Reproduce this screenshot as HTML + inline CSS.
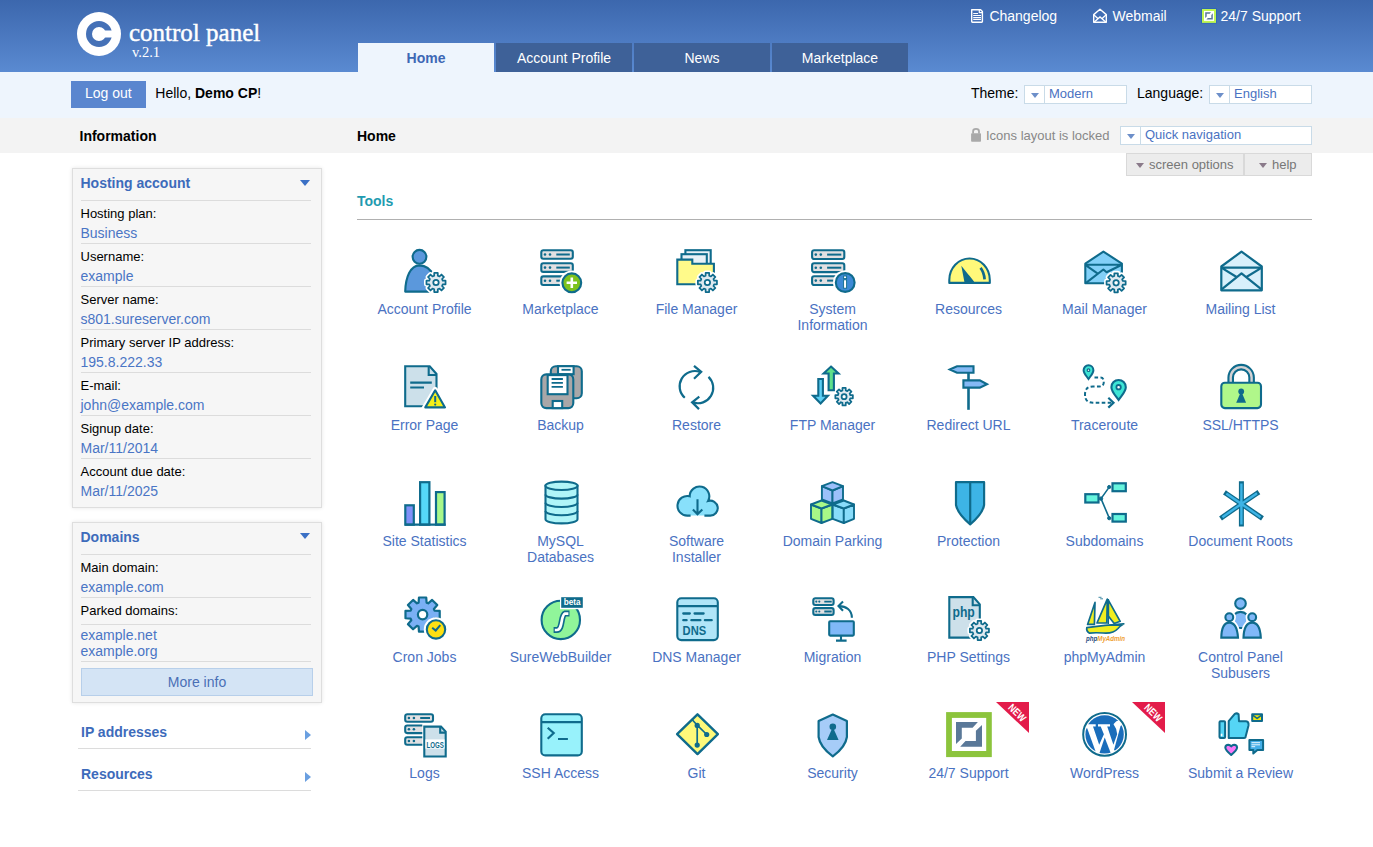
<!DOCTYPE html>
<html><head><meta charset="utf-8">
<style>
*{margin:0;padding:0;box-sizing:border-box}
html,body{width:1373px;height:847px;overflow:hidden;background:#fff;font-family:"Liberation Sans",sans-serif;font-size:14px;color:#000}
.a{position:absolute;white-space:nowrap}
#hdr{position:absolute;left:0;top:0;width:1373px;height:72px;background:linear-gradient(#3c67ad,#5a8ad1)}
#band{position:absolute;left:0;top:72px;width:1373px;height:46px;background:#eef5fd}
#gray{position:absolute;left:0;top:118px;width:1373px;height:35px;background:#f3f3f3}
.tab{position:absolute;top:43px;height:29px;width:136px;background:#3e6198;color:#fff;text-align:center;font-size:14px;line-height:31px}
.tab.on{background:#eef5fd;color:#3d68b5;font-weight:bold}
.tl{color:#fff;font-size:14px;line-height:16px}
.sel{position:absolute;height:19px;background:#fff;border:1px solid #c9dbe8}
.sel .ar{position:absolute;left:0;top:0;width:20px;height:17px;border-right:1px solid #c9dbe8}
.sel .ar:after{content:"";position:absolute;left:5.5px;top:6.5px;border-left:4.5px solid transparent;border-right:4.5px solid transparent;border-top:5px solid #6d8fc9}
.sel .tx{position:absolute;left:24px;top:0px;font-size:13px;line-height:15px;color:#4a72c2}
.box{position:absolute;left:72px;width:250px;background:#f6f6f6;border:1px solid #dedede;box-shadow:0 0 4px rgba(0,0,0,.10)}
.bh{position:absolute;left:7.5px;font-weight:bold;color:#3d6bbb;font-size:14px;line-height:16px}
.tri{position:absolute;left:227px;border-left:5.5px solid transparent;border-right:5.5px solid transparent;border-top:6px solid #3b70c5}
.sep{position:absolute;left:8px;width:230px;height:1px;background:#dcdcdc}
.lb{position:absolute;left:7.5px;font-size:13px;line-height:15px;color:#000}
.vl{position:absolute;left:7.5px;font-size:14px;line-height:16px;color:#4a75c5}
.ic{position:absolute;width:136px;text-align:center}
.ic svg{position:absolute;left:44px;top:0;width:48px;height:48px;overflow:visible}
.ic .t{position:absolute;left:0.5px;top:55px;width:136px;text-align:center;color:#4a72c2;font-size:14px;line-height:16px;white-space:normal}
</style></head><body>
<div id="hdr"></div>
<div id="band"></div>
<div id="gray"></div>
<!-- logo -->
<svg class="a" style="left:77px;top:12px" width="44" height="44" viewBox="0 0 44 44">
<circle cx="22" cy="22" r="22" fill="#fff"/>
<circle cx="22" cy="22" r="10" fill="none" stroke="#4571b7" stroke-width="6"/>
<rect x="28" y="18.5" width="10" height="7" fill="#fff"/>
</svg>
<div class="a" style="left:129px;top:18px;font-family:'Liberation Serif',serif;font-size:25px;line-height:30px;color:#fff;-webkit-text-stroke:0.4px #fff">control panel</div>
<div class="a" style="left:132px;top:44px;font-family:'Liberation Serif',serif;font-size:14.5px;line-height:17px;color:#fff">v.2.1</div>
<!-- tabs -->
<div class="tab on" style="left:358px">Home</div>
<div class="tab" style="left:496px">Account Profile</div>
<div class="tab" style="left:634px">News</div>
<div class="tab" style="left:772px">Marketplace</div>
<!-- top links -->
<div class="a tl" style="left:989.4px;top:8px">Changelog</div>
<div class="a tl" style="left:1112.5px;top:8px">Webmail</div>
<div class="a tl" style="left:1220.5px;top:8px">24/7 Support</div>
<!-- band -->
<div class="a" style="left:71px;top:81px;width:75px;height:27px;background:#5a86cf;color:#fff;text-align:center;line-height:24.5px;text-indent:-0.5px">Log out</div>
<div class="a" style="left:155.3px;top:85.3px;line-height:16px">Hello, <b>Demo CP</b>!</div>
<div class="a" style="left:971px;top:85px;line-height:16px">Theme:</div>
<div class="sel" style="left:1024px;top:85px;width:103px"><div class="ar"></div><div class="tx">Modern</div></div>
<div class="a" style="left:1137px;top:85px;line-height:16px">Language:</div>
<div class="sel" style="left:1209px;top:85px;width:103px"><div class="ar"></div><div class="tx">English</div></div>
<!-- gray band -->
<div class="a" style="left:79.5px;top:128px;font-weight:bold;line-height:16px">Information</div>
<div class="a" style="left:357px;top:128px;font-weight:bold;line-height:16px">Home</div>
<div class="a" style="left:986px;top:128px;font-size:13px;line-height:15px;color:#888">Icons layout is locked</div>
<div class="sel" style="left:1120px;top:126px;width:192px"><div class="ar"></div><div class="tx">Quick navigation</div></div>
<div class="a" style="left:1126px;top:153px;width:118px;height:23px;background:#ececec;border:1px solid #d9d9d9;font-size:13px;line-height:21px;color:#777;padding-left:22px">screen options</div>
<div class="a" style="left:1244px;top:153px;width:68px;height:23px;background:#ececec;border:1px solid #d9d9d9;font-size:13px;line-height:21px;color:#777;padding-left:27px">help</div>
<!-- tools -->
<div class="a" style="left:357px;top:193px;font-weight:bold;color:#1f9bb0;line-height:16px">Tools</div>
<div class="a" style="left:357px;top:219px;width:955px;height:1px;background:#b0b0b0"></div>
<!--HDRICONS-->
<svg class="a" style="left:966px;top:4px" width="24" height="24" viewBox="966 4 24 24"><path d="M971.7,9.7H980.6L982.4,11.5V21.6Q982.4,22.3 981.7,22.3H972.4Q971.7,22.3 971.7,21.6Z" fill="none" stroke="#fff" stroke-width="1.4" stroke-linejoin="round"/><path d="M973.2,13.5H978M973.2,15.5H981M973.2,17.5H981M973.2,19.4H981" stroke="#fff" stroke-width="1.1"/><path d="M979.3,9.7V12.6H982.4" fill="none" stroke="#fff" stroke-width="1.2"/></svg>
<svg class="a" style="left:1088px;top:4px" width="24" height="24" viewBox="1088 4 24 24"><path d="M1093.7,22.2V14.6L1100,9.2L1106.3,14.6V22.2Z" fill="none" stroke="#fff" stroke-width="1.4" stroke-linejoin="round"/><path d="M1094,15L1097.6,18.2M1106,15L1102.4,18.2M1094.3,21.9L1100,16.9L1105.7,21.9" fill="none" stroke="#fff" stroke-width="1.3"/></svg>
<svg class="a" style="left:1197px;top:4px" width="24" height="24" viewBox="1197 4 24 24"><rect x="1201.4" y="8.4" width="15.2" height="15" fill="#2563b0"/><rect x="1202" y="9" width="14" height="13.9" fill="#bff552"/><rect x="1204" y="11" width="10" height="9.9" fill="#fff"/><path d="M1205.2,12.2H1211.1L1209.6,13.7H1206.7V16.5L1205.2,18Z" fill="#5a7898"/><path d="M1212.8,13.2V19.6H1206.4L1207.9,18.1H1211.3V15Z" fill="#5a7898"/></svg>
<svg class="a" style="left:964px;top:122px" width="24" height="24" viewBox="964 122 24 24"><path d="M973.1,133.5V131.3Q973.1,128.9 976,128.9Q979,128.9 979,131.3V133.5" fill="none" stroke="#a9a9a9" stroke-width="1.8"/><rect x="971.1" y="133.3" width="9.9" height="8.5" rx="0.8" fill="#a9a9a9"/></svg>
<div class="a" style="left:1136px;top:163px;border-left:4.6px solid transparent;border-right:4.6px solid transparent;border-top:5.2px solid #8a7a8a"></div>
<div class="a" style="left:1259px;top:163px;border-left:4.6px solid transparent;border-right:4.6px solid transparent;border-top:5.2px solid #8a7a8a"></div>
<!--/HDRICONS-->
<!--SIDEBAR-->
<div class="box" style="top:168px;height:340px">
<div class="bh" style="top:6px">Hosting account</div><div class="tri" style="top:11px"></div><div class="sep" style="top:31px"></div>
<div class="lb" style="top:37px">Hosting plan:</div><div class="vl" style="top:56px">Business</div>
<div class="sep" style="top:74px"></div>
<div class="lb" style="top:80px">Username:</div><div class="vl" style="top:99px">example</div>
<div class="sep" style="top:117px"></div>
<div class="lb" style="top:123px">Server name:</div><div class="vl" style="top:142px">s801.sureserver.com</div>
<div class="sep" style="top:160px"></div>
<div class="lb" style="top:166px">Primary server IP address:</div><div class="vl" style="top:185px">195.8.222.33</div>
<div class="sep" style="top:203px"></div>
<div class="lb" style="top:209px">E-mail:</div><div class="vl" style="top:228px">john@example.com</div>
<div class="sep" style="top:246px"></div>
<div class="lb" style="top:252px">Signup date:</div><div class="vl" style="top:271px">Mar/11/2014</div>
<div class="sep" style="top:289px"></div>
<div class="lb" style="top:295px">Account due date:</div><div class="vl" style="top:314px">Mar/11/2025</div>
</div>
<div class="box" style="top:522px;height:181px">
<div class="bh" style="top:6px">Domains</div><div class="tri" style="top:10px"></div><div class="sep" style="top:31px"></div>
<div class="lb" style="top:37px">Main domain:</div><div class="vl" style="top:56px">example.com</div><div class="sep" style="top:74px"></div>
<div class="lb" style="top:80px">Parked domains:</div><div class="sep" style="top:101px"></div>
<div class="vl" style="top:104px">example.net</div><div class="vl" style="top:120px">example.org</div><div class="sep" style="top:138px"></div>
<div style="position:absolute;left:8px;top:145px;width:232px;height:28px;background:#d4e4f5;border:1px solid #b7cfea;text-align:center;line-height:26px;color:#4a6fb5">More info</div>
</div>
<div class="a" style="left:81px;top:724px;font-weight:bold;color:#3d6bbb;line-height:16px">IP addresses</div>
<div class="a" style="left:305px;top:730px;border-top:5.5px solid transparent;border-bottom:5.5px solid transparent;border-left:6.5px solid #6a9fe0"></div>
<div class="a" style="left:78px;top:748px;width:233px;height:1px;background:#dcdcdc"></div>
<div class="a" style="left:81px;top:766px;font-weight:bold;color:#3d6bbb;line-height:16px">Resources</div>
<div class="a" style="left:305px;top:772px;border-top:5.5px solid transparent;border-bottom:5.5px solid transparent;border-left:6.5px solid #6a9fe0"></div>
<div class="a" style="left:78px;top:790px;width:233px;height:1px;background:#dcdcdc"></div>
<!--/SIDEBAR-->
<!--ICONS-->
<div class="ic" style="left:356px;top:246px"><svg viewBox="0 0 48 48"><g stroke="#0f6b8c" stroke-width="2.1" stroke-linejoin="round"><path d="M5.2,45.6 C5.6,31 10.5,19.6 19.5,19.4 C26,19.4 30.5,23 34,30 L34,45.6Z" fill="#5b98dc"/><circle cx="19.5" cy="10.8" r="6.9" fill="#5b98dc"/></g><path d="M34.19,29.74 L34.23,26.96 L37.77,26.96 L37.81,29.74 L39.50,30.44 L41.49,28.51 L43.99,31.01 L42.06,33.00 L42.76,34.69 L45.54,34.73 L45.54,38.27 L42.76,38.31 L42.06,40.00 L43.99,41.99 L41.49,44.49 L39.50,42.56 L37.81,43.26 L37.77,46.04 L34.23,46.04 L34.19,43.26 L32.50,42.56 L30.51,44.49 L28.01,41.99 L29.94,40.00 L29.24,38.31 L26.46,38.27 L26.46,34.73 L29.24,34.69 L29.94,33.00 L28.01,31.01 L30.51,28.51 L32.50,30.44Z" fill="#fff" stroke="#fff" stroke-width="4.95" stroke-linejoin="round"/><path d="M34.19,29.74 L34.23,26.96 L37.77,26.96 L37.81,29.74 L39.50,30.44 L41.49,28.51 L43.99,31.01 L42.06,33.00 L42.76,34.69 L45.54,34.73 L45.54,38.27 L42.76,38.31 L42.06,40.00 L43.99,41.99 L41.49,44.49 L39.50,42.56 L37.81,43.26 L37.77,46.04 L34.23,46.04 L34.19,43.26 L32.50,42.56 L30.51,44.49 L28.01,41.99 L29.94,40.00 L29.24,38.31 L26.46,38.27 L26.46,34.73 L29.24,34.69 L29.94,33.00 L28.01,31.01 L30.51,28.51 L32.50,30.44Z" fill="#dfe9f0" stroke="#0f6b8c" stroke-width="1.75" stroke-linejoin="round"/><circle cx="36" cy="36.5" r="2.7" fill="#fff" stroke="#0f6b8c" stroke-width="1.75"/></svg><div class="t">Account Profile</div></div>
<div class="ic" style="left:492px;top:246px"><svg viewBox="0 0 48 48"><rect x="5.3" y="4.2" width="31.499999999999996" height="8.6" rx="2" fill="#e1e0e2" stroke="#0f6b8c" stroke-width="2.1"/><circle cx="9.0" cy="8.5" r="1.3" fill="#0f6b8c"/><circle cx="14.0" cy="8.5" r="1.3" fill="#0f6b8c"/><path d="M20.3,8.5H33.8" stroke="#0f6b8c" stroke-width="2"/><rect x="5.3" y="17.3" width="31.499999999999996" height="8.6" rx="2" fill="#e1e0e2" stroke="#0f6b8c" stroke-width="2.1"/><circle cx="9.0" cy="21.6" r="1.3" fill="#0f6b8c"/><circle cx="14.0" cy="21.6" r="1.3" fill="#0f6b8c"/><path d="M20.3,21.6H33.8" stroke="#0f6b8c" stroke-width="2"/><rect x="5.3" y="30.4" width="31.499999999999996" height="8.6" rx="2" fill="#e1e0e2" stroke="#0f6b8c" stroke-width="2.1"/><circle cx="9.0" cy="34.699999999999996" r="1.3" fill="#0f6b8c"/><circle cx="14.0" cy="34.699999999999996" r="1.3" fill="#0f6b8c"/><path d="M20.3,34.699999999999996H33.8" stroke="#0f6b8c" stroke-width="2"/><circle cx="35.8" cy="36.8" r="12.2" fill="#fff"/><circle cx="35.8" cy="36.8" r="9.4" fill="#7dc21e" stroke="#0f6b8c" stroke-width="2.1"/><path d="M30.6,36.8H41M35.8,31.6V42" stroke="#fff" stroke-width="2.6"/></svg><div class="t">Marketplace</div></div>
<div class="ic" style="left:628px;top:246px"><svg viewBox="0 0 48 48"><g stroke="#0f6b8c" stroke-width="2.1"><rect x="13.4" y="4.2" width="25.3" height="22" fill="#e8f1f7"/><rect x="9.5" y="8.2" width="25.3" height="20" fill="#e8f1f7"/><path d="M5.3,38.3V13.6H20.3V17.7H41.9V38.3Z" fill="#fffa8a"/></g><path d="M33.59,29.74 L33.63,26.96 L37.17,26.96 L37.21,29.74 L38.90,30.44 L40.89,28.51 L43.39,31.01 L41.46,33.00 L42.16,34.69 L44.94,34.73 L44.94,38.27 L42.16,38.31 L41.46,40.00 L43.39,41.99 L40.89,44.49 L38.90,42.56 L37.21,43.26 L37.17,46.04 L33.63,46.04 L33.59,43.26 L31.90,42.56 L29.91,44.49 L27.41,41.99 L29.34,40.00 L28.64,38.31 L25.86,38.27 L25.86,34.73 L28.64,34.69 L29.34,33.00 L27.41,31.01 L29.91,28.51 L31.90,30.44Z" fill="#fff" stroke="#fff" stroke-width="4.95" stroke-linejoin="round"/><path d="M33.59,29.74 L33.63,26.96 L37.17,26.96 L37.21,29.74 L38.90,30.44 L40.89,28.51 L43.39,31.01 L41.46,33.00 L42.16,34.69 L44.94,34.73 L44.94,38.27 L42.16,38.31 L41.46,40.00 L43.39,41.99 L40.89,44.49 L38.90,42.56 L37.21,43.26 L37.17,46.04 L33.63,46.04 L33.59,43.26 L31.90,42.56 L29.91,44.49 L27.41,41.99 L29.34,40.00 L28.64,38.31 L25.86,38.27 L25.86,34.73 L28.64,34.69 L29.34,33.00 L27.41,31.01 L29.91,28.51 L31.90,30.44Z" fill="#dfe9f0" stroke="#0f6b8c" stroke-width="1.75" stroke-linejoin="round"/><circle cx="35.4" cy="36.5" r="2.7" fill="#fff" stroke="#0f6b8c" stroke-width="1.75"/></svg><div class="t">File Manager</div></div>
<div class="ic" style="left:764px;top:246px"><svg viewBox="0 0 48 48"><rect x="4.1" y="4.2" width="32.199999999999996" height="8.8" rx="2" fill="#e1e0e2" stroke="#0f6b8c" stroke-width="2.1"/><circle cx="7.8" cy="8.600000000000001" r="1.3" fill="#0f6b8c"/><circle cx="12.799999999999999" cy="8.600000000000001" r="1.3" fill="#0f6b8c"/><path d="M19.1,8.600000000000001H33.3" stroke="#0f6b8c" stroke-width="2"/><rect x="4.1" y="17.3" width="32.199999999999996" height="8.8" rx="2" fill="#e1e0e2" stroke="#0f6b8c" stroke-width="2.1"/><circle cx="7.8" cy="21.700000000000003" r="1.3" fill="#0f6b8c"/><circle cx="12.799999999999999" cy="21.700000000000003" r="1.3" fill="#0f6b8c"/><path d="M19.1,21.700000000000003H33.3" stroke="#0f6b8c" stroke-width="2"/><rect x="4.1" y="30.2" width="32.199999999999996" height="8.8" rx="2" fill="#e1e0e2" stroke="#0f6b8c" stroke-width="2.1"/><circle cx="7.8" cy="34.6" r="1.3" fill="#0f6b8c"/><circle cx="12.799999999999999" cy="34.6" r="1.3" fill="#0f6b8c"/><path d="M19.1,34.6H33.3" stroke="#0f6b8c" stroke-width="2"/><circle cx="37.2" cy="36.5" r="12.2" fill="#fff"/><circle cx="37.2" cy="36.5" r="9.4" fill="#3d8ad6" stroke="#0f6b8c" stroke-width="2.1"/><rect x="35.6" y="30" width="3" height="2.6" fill="#fff" stroke="#0f6b8c" stroke-width="0.9"/><rect x="35.6" y="33.8" width="3" height="8.4" fill="#fff" stroke="#0f6b8c" stroke-width="0.9"/></svg><div class="t">System<br>Information</div></div>
<div class="ic" style="left:900px;top:246px"><svg viewBox="0 0 48 48"><path d="M5.3,36.9V34 A20.25,21.5 0 0 1 45.8,34V36.9Z" fill="#fff97a" stroke="#0f6b8c" stroke-width="2.1" stroke-linejoin="round"/><path d="M17.3,19.8L20.6,36.9H30.8C28.5,33 24,28.5 17.3,19.8Z" fill="#0f6b8c"/><path d="M36.5,21.8Q40,26 40.6,33.3" fill="none" stroke="#0f6b8c" stroke-width="2.7"/></svg><div class="t">Resources</div></div>
<div class="ic" style="left:1036px;top:246px"><svg viewBox="0 0 48 48"><g stroke="#0f6b8c" stroke-width="2.1" stroke-linejoin="round" fill="none"><path d="M5.3,37.3V17.6L23.4,5.6L41.9,17.6V37.3Z" fill="#82d0f8"/><path d="M5.3,18.8H41.9M5.3,18.8L17.4,27.3M5.7,37.2L23.4,23.5L26.6,26.2L41.9,18.8"/></g><path d="M34.29,30.04 L34.33,27.26 L37.87,27.26 L37.91,30.04 L39.60,30.74 L41.59,28.81 L44.09,31.31 L42.16,33.30 L42.86,34.99 L45.64,35.03 L45.64,38.57 L42.86,38.61 L42.16,40.30 L44.09,42.29 L41.59,44.79 L39.60,42.86 L37.91,43.56 L37.87,46.34 L34.33,46.34 L34.29,43.56 L32.60,42.86 L30.61,44.79 L28.11,42.29 L30.04,40.30 L29.34,38.61 L26.56,38.57 L26.56,35.03 L29.34,34.99 L30.04,33.30 L28.11,31.31 L30.61,28.81 L32.60,30.74Z" fill="#fff" stroke="#fff" stroke-width="4.95" stroke-linejoin="round"/><path d="M34.29,30.04 L34.33,27.26 L37.87,27.26 L37.91,30.04 L39.60,30.74 L41.59,28.81 L44.09,31.31 L42.16,33.30 L42.86,34.99 L45.64,35.03 L45.64,38.57 L42.86,38.61 L42.16,40.30 L44.09,42.29 L41.59,44.79 L39.60,42.86 L37.91,43.56 L37.87,46.34 L34.33,46.34 L34.29,43.56 L32.60,42.86 L30.61,44.79 L28.11,42.29 L30.04,40.30 L29.34,38.61 L26.56,38.57 L26.56,35.03 L29.34,34.99 L30.04,33.30 L28.11,31.31 L30.61,28.81 L32.60,30.74Z" fill="#dfe9f0" stroke="#0f6b8c" stroke-width="1.75" stroke-linejoin="round"/><circle cx="36.1" cy="36.8" r="2.7" fill="#fff" stroke="#0f6b8c" stroke-width="1.75"/></svg><div class="t">Mail Manager</div></div>
<div class="ic" style="left:1172px;top:246px"><svg viewBox="0 0 48 48"><g stroke="#0f6b8c" stroke-width="2.2" stroke-linejoin="round" fill="none"><path d="M5.3,44.3V20.5L25.5,5.6L45.8,20.5V44.3Z" fill="#d8f0fb"/><path d="M5.3,21.6H45.8M5.3,21.6L20.2,30.8M30.8,30.8L45.8,21.6M5.3,43.6L25.5,27.3L45.8,43.6"/></g></svg><div class="t">Mailing List</div></div>
<div class="ic" style="left:356px;top:362px"><svg viewBox="0 0 48 48"><g stroke="#0f6b8c" stroke-width="2.1" fill="none"><path d="M5.2,44.3V4.2H29.7L36.5,12V44.3Z" fill="#cce0ea"/><path d="M28.7,4.2V13H36.5"/><path d="M10.2,20.6H31.8M10.2,25.5H24" stroke-width="2.2"/></g><path d="M35.2,27.3L46.5,46.6H23.9Z" fill="#fff" stroke="#fff" stroke-width="5" stroke-linejoin="round"/><path d="M35.2,28.3L45,45.4H25.3Z" fill="#f5f019" stroke="#0f6b8c" stroke-width="2.1" stroke-linejoin="round"/><path d="M35.2,34V40.2" stroke="#0f6b8c" stroke-width="2"/><circle cx="35.2" cy="42.6" r="1.1" fill="#0f6b8c"/></svg><div class="t">Error Page</div></div>
<div class="ic" style="left:492px;top:362px"><svg viewBox="0 0 48 48"><g stroke="#0f6b8c" stroke-width="2.1"><rect x="14.8" y="4.2" width="31" height="32" rx="5" fill="#a9a7a8"/><rect x="22" y="4.2" width="15.6" height="8" fill="#fff"/><path d="M25.5,7.8H34.7" stroke-width="1.8"/><rect x="5.3" y="12.4" width="32" height="33.7" rx="5" fill="#a9a7a8"/><rect x="11.7" y="13.1" width="19.8" height="19.1" fill="#fff"/><path d="M15.6,17H26.9M15.6,20.9H26.9M15.6,24.8H26.9" stroke-width="1.8"/><rect x="16.7" y="39" width="9.5" height="7.1" fill="#fff"/></g></svg><div class="t">Backup</div></div>
<div class="ic" style="left:628px;top:362px"><svg viewBox="0 0 48 48"><g stroke="#0f6b8c" stroke-width="2.2" fill="none"><path d="M12.8,35.8A15.3,15.3 0 0 1 28,9.9"/><path d="M22,3.9L29.2,9.9L22,16.7"/><path d="M36.5,14.9A15.3,15.3 0 0 1 20.9,40.4"/><path d="M27.3,34.7L20.1,40.4L27,47.1"/></g></svg><div class="t">Restore</div></div>
<div class="ic" style="left:764px;top:362px"><svg viewBox="0 0 48 48"><g stroke="#0f6b8c" stroke-width="2.1" stroke-linejoin="miter"><path d="M23,4.6L30.5,11.5H25.9V28.3H20.6V11.5H15.6Z" fill="#5ee08a"/><path d="M10.3,17H14.9V33.8H19.9L12.6,41.5L5.1,33.8H10.3Z" fill="#5ccff5"/></g><path d="M34.44,28.52 L34.48,25.95 L37.72,25.95 L37.76,28.52 L39.30,29.16 L41.14,27.37 L43.43,29.66 L41.64,31.50 L42.28,33.04 L44.85,33.08 L44.85,36.32 L42.28,36.36 L41.64,37.90 L43.43,39.74 L41.14,42.03 L39.30,40.24 L37.76,40.88 L37.72,43.45 L34.48,43.45 L34.44,40.88 L32.90,40.24 L31.06,42.03 L28.77,39.74 L30.56,37.90 L29.92,36.36 L27.35,36.32 L27.35,33.08 L29.92,33.04 L30.56,31.50 L28.77,29.66 L31.06,27.37 L32.90,29.16Z" fill="#dfe9f0" stroke="#0f6b8c" stroke-width="1.75" stroke-linejoin="round"/><circle cx="36.1" cy="34.7" r="2.5" fill="#fff" stroke="#0f6b8c" stroke-width="1.75"/></svg><div class="t">FTP Manager</div></div>
<div class="ic" style="left:900px;top:362px"><svg viewBox="0 0 48 48"><g stroke="#0f6b8c" stroke-width="2.1" stroke-linejoin="miter"><path d="M24.5,11V47.8" stroke-width="2.6"/><path d="M5.8,7.5L13,4.2H29.5V10.7H13Z" fill="#85b9f5"/><path d="M19.4,18.4H35.8L43,22.2L35.8,25.6H19.4Z" fill="#85b9f5"/></g></svg><div class="t">Redirect URL</div></div>
<div class="ic" style="left:1036px;top:362px"><svg viewBox="0 0 48 48"><g stroke="#0f6b8c" stroke-width="2" fill="none"><path d="M14.5,15.6H20.5Q23.8,15.6 23.8,20Q23.8,24.5 19.5,24.5H13Q5,24.5 5,32.5Q5,40.7 13,40.7H33" stroke-dasharray="3.6 2.4"/><path d="M28.3,35.8L33.5,40.7L28.3,45.6" stroke-width="2.2"/><path d="M8.5,17C6,13.5 3.6,11 3.6,8.2A4.9,4.9 0 0 1 13.4,8.2C13.4,11 11,13.5 8.5,17Z" fill="#3de5d5"/><circle cx="8.5" cy="8.2" r="1.3" fill="#fff" stroke-width="1.2"/><path d="M38.6,38C35,33 31.4,29.5 31.4,25.2A7.2,7.2 0 0 1 45.8,25.2C45.8,29.5 42,33 38.6,38Z" fill="#3de5d5" stroke-width="2.1"/><circle cx="38.6" cy="25.2" r="2.2" fill="#fff" stroke-width="1.8"/></g></svg><div class="t">Traceroute</div></div>
<div class="ic" style="left:1172px;top:362px"><svg viewBox="0 0 48 48"><path d="M14.7,22V15.6A10.45,10.45 0 0 1 35.6,15.6V22" fill="none" stroke="#0f6b8c" stroke-width="6.6"/><path d="M14.7,22V15.6A10.45,10.45 0 0 1 35.6,15.6V22" fill="none" stroke="#d4d2d4" stroke-width="2.4"/><rect x="5.3" y="20.8" width="39.7" height="25.3" rx="3.5" fill="#b0f78a" stroke="#0f6b8c" stroke-width="2.1"/><circle cx="25.2" cy="29.4" r="2.9" fill="#0f6b8c"/><path d="M25.2,29L30.1,40.7H20.2Z" fill="#0f6b8c"/></svg><div class="t">SSL/HTTPS</div></div>
<div class="ic" style="left:356px;top:478px"><svg viewBox="0 0 48 48"><g stroke="#0f6b8c" stroke-width="2.2"><rect x="5.3" y="27.3" width="8.5" height="19.4" fill="#8090f8"/><rect x="20.1" y="4.2" width="9.3" height="42.5" fill="#55d8f8"/><rect x="36" y="14.1" width="8.6" height="32.6" fill="#a8f88a"/><path d="M5,46.7H45.7"/></g></svg><div class="t">Site Statistics</div></div>
<div class="ic" style="left:492px;top:478px"><svg viewBox="0 0 48 48"><g stroke="#0f6b8c" stroke-width="2.1" fill="none"><path d="M9.5,7.8V41.2A16,4.2 0 0 0 41.5,41.2V7.8Z" fill="#b0f5f8"/><ellipse cx="25.5" cy="7.8" rx="16" ry="4.2" fill="#b0f5f8"/><path d="M9.5,16.4A16,4.2 0 0 0 41.5,16.4M9.5,24.8A16,4.2 0 0 0 41.5,24.8M9.5,33A16,4.2 0 0 0 41.5,33"/></g></svg><div class="t">MySQL<br>Databases</div></div>
<div class="ic" style="left:628px;top:478px"><svg viewBox="0 0 48 48"><path d="M15.4,37.6A9.8,9.8 0 1 1 17.7,18.3A9.8,9.8 0 1 1 36.14,22.9A7.5,7.5 0 1 1 38.3,37.6Z" fill="#88e0fb"/><g stroke="#0f6b8c" stroke-width="2.1" fill="none"><path d="M18.6,37.6H15.4A9.8,9.8 0 1 1 17.7,18.3A9.8,9.8 0 1 1 36.14,22.9A7.5,7.5 0 1 1 38.3,37.6H32.4"/><path d="M25.5,21.3V36.3M20.9,31.5L25.5,36.3L30.3,31.5"/></g></svg><div class="t">Software<br>Installer</div></div>
<div class="ic" style="left:764px;top:478px"><svg viewBox="0 0 48 48"><g stroke="#0f6b8c" stroke-width="1.9" stroke-linejoin="round"><path d="M13.9,8.2L24.5,12.5V25.5L13.9,21.5Z" fill="#9cc0fa"/><path d="M24.5,12.5L35,8.2V21.5L24.5,25.5Z" fill="#9cc0fa"/><path d="M24.5,4.2L35,8.2L24.5,12.5L13.9,8.2Z" fill="#9cc0fa"/><path d="M3,26.5L13.5,30.5V45L3,40.8Z" fill="#a8f887"/><path d="M13.5,30.5L24.3,26.5V40.8L13.5,45Z" fill="#a8f887"/><path d="M13.5,22.5L24.3,26.5L13.5,30.5L3,26.5Z" fill="#a8f887"/><path d="M24.7,26.5L35.8,30.5V45L24.7,40.8Z" fill="#88dcfa"/><path d="M35.8,30.5L46,26.5V40.8L35.8,45Z" fill="#88dcfa"/><path d="M35.8,22.5L46,26.5L35.8,30.5L24.7,26.5Z" fill="#88dcfa"/></g></svg><div class="t">Domain Parking</div></div>
<div class="ic" style="left:900px;top:478px"><svg viewBox="0 0 48 48"><g stroke="#0f6b8c" stroke-width="2.2" stroke-linejoin="round"><path d="M12,4.2H40.1V27Q38.5,36 26.2,46.3Q13.8,36 12,27Z" fill="#3db4e6"/><path d="M26.2,4.2V46"/></g></svg><div class="t">Protection</div></div>
<div class="ic" style="left:1036px;top:478px"><svg viewBox="0 0 48 48"><g stroke="#0f6b8c"><path d="M21,20.6L29.4,8.9M21,20.6L29.4,40.4" stroke-width="1.6"/><circle cx="21" cy="20.6" r="1.7" fill="#0f6b8c"/><circle cx="29.2" cy="9" r="1.6" fill="#0f6b8c"/><circle cx="29.2" cy="40.2" r="1.6" fill="#0f6b8c"/><rect x="5.3" y="16.2" width="13.2" height="8.3" fill="#66f5dd" stroke-width="2.2"/><rect x="32.5" y="5.3" width="13.3" height="7.9" fill="#66f5dd" stroke-width="2.2"/><rect x="32.5" y="36" width="13.3" height="7.6" fill="#66f5dd" stroke-width="2.2"/></g></svg><div class="t">Subdomains</div></div>
<div class="ic" style="left:1172px;top:478px"><svg viewBox="0 0 48 48"><g fill="none" stroke-linecap="square"><path d="M25.4,5.8V46M25.4,25.9L10.5,15.8M25.4,25.9L40.8,15.5M25.4,25.9L6.6,39M25.4,25.9L44.4,39" stroke="#0f6b8c" stroke-width="5"/><path d="M25.4,6.6V45.2M25.4,25.9L11.3,16.3M25.4,25.9L40,16M25.4,25.9L7.4,38.5M25.4,25.9L43.6,38.5" stroke="#3db4e6" stroke-width="2.4"/></g></svg><div class="t">Document Roots</div></div>
<div class="ic" style="left:356px;top:594px"><svg viewBox="0 0 48 48"><path d="M18.60,8.65 L18.96,3.48 L26.24,3.48 L26.60,8.65 L28.22,9.32 L32.13,5.92 L37.28,11.07 L33.88,14.98 L34.55,16.60 L39.72,16.96 L39.72,24.24 L34.55,24.60 L33.88,26.22 L37.28,30.13 L32.13,35.28 L28.22,31.88 L26.60,32.55 L26.24,37.72 L18.96,37.72 L18.60,32.55 L16.98,31.88 L13.07,35.28 L7.92,30.13 L11.32,26.22 L10.65,24.60 L5.48,24.24 L5.48,16.96 L10.65,16.60 L11.32,14.98 L7.92,11.07 L13.07,5.92 L16.98,9.32Z" fill="#7ab0f5" stroke="#0f6b8c" stroke-width="2.2" stroke-linejoin="round"/><circle cx="22.6" cy="20.6" r="4.7" fill="#fff" stroke="#0f6b8c" stroke-width="2.2"/><circle cx="36" cy="35.4" r="12.2" fill="#fff"/><circle cx="36" cy="35.4" r="9.2" fill="#fde012" stroke="#0f6b8c" stroke-width="2.1"/><path d="M32.2,33.7L35.7,36.5L40.3,31.2" fill="none" stroke="#0f6b8c" stroke-width="2"/></svg><div class="t">Cron Jobs</div></div>
<div class="ic" style="left:492px;top:594px"><svg viewBox="0 0 48 48"><circle cx="24.8" cy="25.9" r="19.2" fill="#90f59a" stroke="#0f6b8c" stroke-width="2.1"/><rect x="24" y="2" width="24" height="13.2" fill="#fff"/><rect x="25.2" y="3.2" width="21.6" height="10.6" fill="#0f6b8c"/><text x="36.2" y="11.2" text-anchor="middle" font-family="Liberation Sans" font-weight="bold" font-size="8.2" fill="#fff">beta</text><path d="M17.6,36H20.8C27,36 24.5,21.2 29,19.6H33.5" fill="none" stroke="#0f6b8c" stroke-width="6"/><path d="M18.8,36H20.8C27,36 24.5,21.2 29,19.6H32.4" fill="none" stroke="#fff" stroke-width="2.7"/></svg><div class="t">SureWebBuilder</div></div>
<div class="ic" style="left:628px;top:594px"><svg viewBox="0 0 48 48"><g stroke="#0f6b8c" stroke-width="2.1" fill="none"><rect x="5.3" y="4.2" width="40.5" height="41.9" rx="4" fill="#b0e5f8"/><path d="M5.3,12.1H45.8"/><path d="M11.3,19.5H17.8M22.6,19.5H31.6M11.3,26.2H14.6M19.4,26.2H28.4M32.9,26.2H39.7" stroke-width="2.3" stroke-linecap="round"/></g><text x="10.6" y="40.8" font-family="Liberation Sans" font-size="12" font-weight="bold" fill="#0f6b8c" textLength="23.6" lengthAdjust="spacingAndGlyphs">DNS</text></svg><div class="t">DNS Manager</div></div>
<div class="ic" style="left:764px;top:594px"><svg viewBox="0 0 48 48"><g stroke="#0f6b8c" stroke-width="2.1" fill="none"><rect x="5.3" y="4.2" width="20.3" height="6.8" rx="2" fill="#e1e0e2"/><rect x="5.3" y="14.1" width="20.3" height="6.8" rx="2" fill="#e1e0e2"/><path d="M16.3,7.6H23.7M16.3,17.5H23.7" stroke-width="1.9"/><path d="M43.9,23.7C43.9,16 38,12.1 31,12.1"/><path d="M35,7.6L30.5,12.1L35,16.8"/><rect x="21.2" y="27.2" width="24.6" height="14.4" rx="1" fill="#80b8f8"/><path d="M33,41.5V46.3M28,46.6H38.6"/></g><circle cx="8.3" cy="7.6" r="1.1" fill="#0f6b8c"/><circle cx="11.3" cy="7.6" r="1.1" fill="#0f6b8c"/><circle cx="8.3" cy="17.5" r="1.1" fill="#0f6b8c"/><circle cx="11.3" cy="17.5" r="1.1" fill="#0f6b8c"/></svg><div class="t">Migration</div></div>
<div class="ic" style="left:900px;top:594px"><svg viewBox="0 0 48 48"><g stroke="#0f6b8c" stroke-width="2.1" fill="none"><path d="M5.3,43.6V3.1H29.4L35.8,10.3V43.6Z" fill="#cde0ea"/><path d="M28.7,3.1V11.2H35.8"/></g><text x="8.5" y="23.2" font-family="Liberation Sans" font-size="14" font-weight="bold" fill="#0f6b8c" textLength="22.3" lengthAdjust="spacingAndGlyphs">php</text><path d="M33.59,29.74 L33.63,26.96 L37.17,26.96 L37.21,29.74 L38.90,30.44 L40.89,28.51 L43.39,31.01 L41.46,33.00 L42.16,34.69 L44.94,34.73 L44.94,38.27 L42.16,38.31 L41.46,40.00 L43.39,41.99 L40.89,44.49 L38.90,42.56 L37.21,43.26 L37.17,46.04 L33.63,46.04 L33.59,43.26 L31.90,42.56 L29.91,44.49 L27.41,41.99 L29.34,40.00 L28.64,38.31 L25.86,38.27 L25.86,34.73 L28.64,34.69 L29.34,33.00 L27.41,31.01 L29.91,28.51 L31.90,30.44Z" fill="#fff" stroke="#fff" stroke-width="4.95" stroke-linejoin="round"/><path d="M33.59,29.74 L33.63,26.96 L37.17,26.96 L37.21,29.74 L38.90,30.44 L40.89,28.51 L43.39,31.01 L41.46,33.00 L42.16,34.69 L44.94,34.73 L44.94,38.27 L42.16,38.31 L41.46,40.00 L43.39,41.99 L40.89,44.49 L38.90,42.56 L37.21,43.26 L37.17,46.04 L33.63,46.04 L33.59,43.26 L31.90,42.56 L29.91,44.49 L27.41,41.99 L29.34,40.00 L28.64,38.31 L25.86,38.27 L25.86,34.73 L28.64,34.69 L29.34,33.00 L27.41,31.01 L29.91,28.51 L31.90,30.44Z" fill="#dfe9f0" stroke="#0f6b8c" stroke-width="1.75" stroke-linejoin="round"/><circle cx="35.4" cy="36.5" r="2.7" fill="#fff" stroke="#0f6b8c" stroke-width="1.75"/></svg><div class="t">PHP Settings</div></div>
<div class="ic" style="left:1036px;top:594px"><svg viewBox="0 0 48 48"><g stroke="#0f6b8c" stroke-width="1.7" stroke-linejoin="round"><path d="M15,8.4L7.6,30.4H14.4Z" fill="#f0ee20"/><path d="M27.3,5.2L17,29H26.8Z" fill="#f0ee20"/><path d="M28.3,6.2L40.2,27.3L34.2,29.5L28.3,22Z" fill="#f0ee20"/><path d="M28.2,5V30" /><path d="M6.8,33.6Q25,31 43.8,29.8Q40,32 38,34.5Q33,40 23,39Q14,38.4 9.6,39.2Q6,37 6.8,33.6Z" fill="#f0ee20"/></g><path d="M18.5,3.3H21.5M20.2,4.8H23" stroke="#0f6b8c" stroke-width="0.8"/><text x="6" y="47.4" font-family="Liberation Sans" font-size="6.6" font-weight="bold" font-style="italic" textLength="39" lengthAdjust="spacingAndGlyphs"><tspan fill="#2a4a80">php</tspan><tspan fill="#f0a030">MyAdmin</tspan></text></svg><div class="t">phpMyAdmin</div></div>
<div class="ic" style="left:1172px;top:594px"><svg viewBox="0 0 48 48"><path d="M17.6,21Q24.5,14.6 31.4,21L28.6,34.2H20.4Z" fill="#80b8f8"/><path d="M17.6,21Q24.5,14.8 31.4,21M21.2,34H27.8" fill="none" stroke="#0f6b8c" stroke-width="2.1"/><circle cx="24.5" cy="9.6" r="5.3" fill="#80b8f8" stroke="#0f6b8c" stroke-width="2.1"/><g stroke="#fff" stroke-width="5.5" fill="#fff"><path d="M5.3,43.6Q5.6,28.6 13.3,28.6Q21,28.6 22,43.6Z"/><circle cx="13.3" cy="23.2" r="3.9"/><path d="M27.5,43.6Q28,28.6 36.2,28.6Q44,28.6 44.8,43.6Z"/><circle cx="36.2" cy="23.2" r="3.9"/></g><g stroke="#0f6b8c" stroke-width="2.1" fill="#80b8f8"><path d="M5.3,43.6Q5.6,28.6 13.3,28.6Q21,28.6 22,43.6Z"/><circle cx="13.3" cy="23.2" r="3.9"/><path d="M27.5,43.6Q28,28.6 36.2,28.6Q44,28.6 44.8,43.6Z"/><circle cx="36.2" cy="23.2" r="3.9"/></g></svg><div class="t">Control Panel<br>Subusers</div></div>
<div class="ic" style="left:356px;top:710px"><svg viewBox="0 0 48 48"><rect x="5.2" y="4.2" width="27.8" height="7.6" rx="2" fill="#e1e0e2" stroke="#0f6b8c" stroke-width="2.1"/><circle cx="8.9" cy="8.0" r="1.3" fill="#0f6b8c"/><circle cx="13.899999999999999" cy="8.0" r="1.3" fill="#0f6b8c"/><path d="M20.2,8.0H30" stroke="#0f6b8c" stroke-width="2"/><rect x="5.2" y="15.5" width="27.8" height="7.6" rx="2" fill="#e1e0e2" stroke="#0f6b8c" stroke-width="2.1"/><circle cx="8.9" cy="19.3" r="1.3" fill="#0f6b8c"/><circle cx="13.899999999999999" cy="19.3" r="1.3" fill="#0f6b8c"/><rect x="5.2" y="27.2" width="27.8" height="7.6" rx="2" fill="#e1e0e2" stroke="#0f6b8c" stroke-width="2.1"/><circle cx="8.9" cy="31.0" r="1.3" fill="#0f6b8c"/><circle cx="13.899999999999999" cy="31.0" r="1.3" fill="#0f6b8c"/><path d="M24.3,47V16.1H41.5L46.7,21.4V47Z" fill="#fff" stroke="#fff" stroke-width="4"/><g stroke="#0f6b8c" stroke-width="2.1" fill="none"><path d="M24.3,46.5V16.6H41L45.7,21.6V46.5Z" fill="#cde0ea"/><path d="M40.2,16.6V22.6H45.7"/></g><rect x="25.4" y="29.4" width="19.2" height="9.2" fill="#fff"/><text x="26.4" y="37.6" font-family="Liberation Sans" font-size="9" font-weight="bold" fill="#0f6b8c" textLength="17.4" lengthAdjust="spacingAndGlyphs">LOGS</text></svg><div class="t">Logs</div></div>
<div class="ic" style="left:492px;top:710px"><svg viewBox="0 0 48 48"><g stroke="#0f6b8c" stroke-width="2.1" fill="none"><rect x="5.3" y="4.2" width="40.5" height="41.2" rx="4" fill="#98f2fb"/><path d="M5.3,12.1H45.8"/><path d="M11.7,17.7L17.7,23L11.7,28.7M22,29H31.9" stroke-width="2.2"/></g></svg><div class="t">SSH Access</div></div>
<div class="ic" style="left:628px;top:710px"><svg viewBox="0 0 48 48"><g stroke="#0f6b8c" stroke-width="2.1" stroke-linejoin="round"><path d="M25.5,4.3L45.9,24.2L25.5,44.1L5.1,24.2Z" fill="#fdf97a" stroke-width="2.4"/><path d="M19.6,9L25.2,15.2V35.1M25.2,15.2L34.7,24.5" fill="none" stroke-width="1.7"/></g><circle cx="25.2" cy="15.4" r="2.6" fill="#0f6b8c"/><circle cx="25.2" cy="35.1" r="2.6" fill="#0f6b8c"/><circle cx="34.7" cy="24.5" r="2.6" fill="#0f6b8c"/></svg><div class="t">Git</div></div>
<div class="ic" style="left:764px;top:710px"><svg viewBox="0 0 48 48"><path d="M24.8,4.5L10.6,11V27Q12,37 24.8,46.3Q37.6,37 38.9,27V11Z" fill="#a6ccf8" stroke="#0f6b8c" stroke-width="2.2" stroke-linejoin="round"/><circle cx="24.8" cy="16.7" r="3.3" fill="#0f6b8c"/><path d="M24.8,17L30.6,30.1H19Z" fill="#0f6b8c"/></svg><div class="t">Security</div></div>
<div class="ic" style="left:900px;top:710px"><svg viewBox="0 0 48 48"><rect x="2.1" y="2.1" width="45.7" height="45" fill="#8cc43c"/><rect x="7.9" y="7.9" width="34.3" height="33.1" fill="#fff"/><path d="M12,12H33.9L28.6,17.8H17.8V28.6L12,33.9Z" fill="#5a7898"/><path d="M38,14.9V36.8H16.2L21.5,31H31.9V20.7Z" fill="#5a7898"/></svg><div class="t">24/7 Support</div></div>
<div class="ic" style="left:1036px;top:710px"><svg viewBox="0 0 48 48"><defs><clipPath id="wpc"><circle cx="24.6" cy="24.4" r="19.2"/></clipPath></defs><circle cx="24.6" cy="24.4" r="21.4" fill="#fff" stroke="#0f6b8c" stroke-width="2"/><g clip-path="url(#wpc)" fill="#1a6dbb"><path d="M-10,-10H58V6L36.3,11.2L33.4,14.25H-10Z"/><path d="M-10,18.2H7.2L15.6,41.4L-10,60Z"/><path d="M15.7,14H18V16.4H20.7L23.9,24.2L19.2,34.8L13,16.4H15.7Z"/><path d="M30,14H33.4Q36.5,18 37.2,24.2L33.4,34.8L27.2,16.4H30Z"/><path d="M40.5,16L60,0V60L34,40Z"/><path d="M24.7,27.4L18.8,45H31.5Z"/></g></svg><div class="t">WordPress</div></div>
<div class="ic" style="left:1172px;top:710px"><svg viewBox="0 0 48 48"><g stroke="#0f6b8c" stroke-width="2" stroke-linejoin="round"><rect x="3.5" y="11.3" width="5.6" height="16.8" rx="1" fill="#55d5f5"/><path d="M12.7,28V11.2L18.8,3.8Q21,2.8 22.6,4.2L23,11.2H30Q33,11.6 32.5,15.5L29.4,27.4Q29,28 28,28Z" fill="#55d5f5"/><rect x="36.2" y="4.2" width="9.8" height="6.8" fill="#f5e80a"/><path d="M36.2,4.8L41.1,8.4L46,4.8" fill="none" stroke-width="1.6"/><path d="M15.2,45Q9.5,40 9.3,37.6Q9.5,34.8 12.3,34.8Q14,35 15.2,36.4Q16.4,35 18.1,34.8Q20.9,34.8 21.1,37.6Q20.9,40 15.2,45Z" fill="#f878f8"/><path d="M33.4,30.1H47.1V40.1H41.4L37.3,43.5V40.1H33.4Z" fill="#44aee8"/></g><path d="M35.5,32.7H44M35.5,34.8H44M35.5,36.7H39.2" stroke="#fff" stroke-width="0.9"/><rect x="4.8" y="23.7" width="1.6" height="2.5" fill="#fff"/></svg><div class="t">Submit a Review</div></div>
<svg class="a" style="left:996px;top:702px" width="33" height="31" viewBox="0 0 33 31"><path d="M0,0H33V31Z" fill="#e31c4a"/><text x="0" y="0" transform="translate(18.6,13.3) rotate(45)" text-anchor="middle" font-family="Liberation Sans" font-weight="bold" font-size="10.5" fill="#fff" textLength="20" lengthAdjust="spacingAndGlyphs">NEW</text></svg>
<svg class="a" style="left:1132px;top:702px" width="33" height="31" viewBox="0 0 33 31"><path d="M0,0H33V31Z" fill="#e31c4a"/><text x="0" y="0" transform="translate(18.6,13.3) rotate(45)" text-anchor="middle" font-family="Liberation Sans" font-weight="bold" font-size="10.5" fill="#fff" textLength="20" lengthAdjust="spacingAndGlyphs">NEW</text></svg>
<!--/ICONS-->
</body></html>
